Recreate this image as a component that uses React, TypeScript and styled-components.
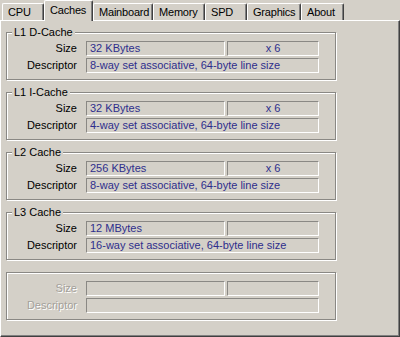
import React from "react";
import styled, { createGlobalStyle } from "styled-components";

const Global = createGlobalStyle`
  html, body { margin: 0; padding: 0; background: #d4d0c8; }
  body { font-family: "Liberation Sans", Arial, sans-serif; font-size: 11px; color: #000; }
`;

const Window = styled.div`
  width: 400px;
  height: 337px;
  display: flex;
  flex-direction: column;
  background: #d4d0c8;
  overflow: hidden;
`;

const TabBar = styled.div`
  height: 20px;
  display: flex;
  align-items: flex-end;
  padding-left: 2px;
  position: relative;
  z-index: 1;
`;

const Tab = styled.div<{ $w: number; $active?: boolean }>`
  box-sizing: border-box;
  width: ${(p) => p.$w}px;
  height: ${(p) => (p.$active ? 21 : 17)}px;
  margin-bottom: ${(p) => (p.$active ? -1 : 0)}px;
  padding: ${(p) => (p.$active ? "3px 0 0 5px" : "2px 0 0 5px")};
  background: #d4d0c8;
  border-top: 1px solid #fff;
  border-left: 1px solid #fff;
  border-right: 1px solid #404040;
  box-shadow: inset -1px 0 0 #808080;
  border-radius: 2px 2px 0 0;
  white-space: nowrap;
  line-height: 13px;
  letter-spacing: -0.2px;
`;

const Panel = styled.div`
  flex: 1;
  box-sizing: border-box;
  border-top: 1px solid #fff;
  border-left: 1px solid #fff;
  border-right: 1px solid #404040;
  border-bottom: 1px solid #404040;
  box-shadow: inset -1px -1px 0 #808080;
  padding: 5px 0 0 5px;
  display: flex;
  flex-direction: column;
  gap: 6px;
`;

const Group = styled.fieldset<{ $untitled?: boolean }>`
  box-sizing: border-box;
  width: 330px;
  margin: ${(p) => (p.$untitled ? "6px" : "0")} 0 0 0;
  padding: ${(p) => (p.$untitled ? "8px" : "2px")} 14px 6px 0;
  border: 1px solid #8a8884;
  box-shadow: inset 1px 1px 0 #fff, 1px 1px 0 #fff;
  display: grid;
  grid-template-columns: 79px 139px 94px;
  row-gap: 2px;
`;

const Title = styled.legend`
  margin-left: 5px;
  padding: 0 2px;
  line-height: 13px;
  background: #d4d0c8;
`;

const Label = styled.div<{ $disabled?: boolean }>`
  box-sizing: border-box;
  grid-column: 1;
  padding-right: 9px;
  text-align: right;
  line-height: 15px;
  color: ${(p) => (p.$disabled ? "#a3a09a" : "#000")};
  text-shadow: ${(p) => (p.$disabled ? "1px 1px 0 #fff" : "none")};
`;

const FieldBox = styled.div`
  box-sizing: border-box;
  height: 15px;
  line-height: 13px;
  padding-left: 3px;
  border-top: 1px solid #8a8884;
  border-left: 1px solid #8a8884;
  border-bottom: 1px solid #fff;
  border-right: 1px solid #fff;
  color: #2e2e8c;
  white-space: nowrap;
  overflow: hidden;
`;

const SizeField = styled(FieldBox)`
  width: 139px;
`;

const CountField = styled(FieldBox)`
  margin-left: 2px;
  width: 92px;
  padding-left: 0;
  text-align: center;
`;

const DescField = styled(FieldBox)`
  grid-column: 2 / 4;
  width: 233px;
`;

const Row = styled.div`
  display: contents;
`;

const tabs: [string, number][] = [
  ["CPU", 42],
  ["Caches", 49],
  ["Mainboard", 60],
  ["Memory", 52],
  ["SPD", 42],
  ["Graphics", 54],
  ["About", 43],
];

const caches = [
  { title: "L1 D-Cache", size: "32 KBytes", count: "x 6", desc: "8-way set associative, 64-byte line size" },
  { title: "L1 I-Cache", size: "32 KBytes", count: "x 6", desc: "4-way set associative, 64-byte line size" },
  { title: "L2 Cache", size: "256 KBytes", count: "x 6", desc: "8-way set associative, 64-byte line size" },
  { title: "L3 Cache", size: "12 MBytes", count: "", desc: "16-way set associative, 64-byte line size" },
];

export default function App() {
  return (
    <Window>
      <Global />
      <TabBar>
        {tabs.map(([t, w]) => (
          <Tab key={t} $w={w} $active={t === "Caches"}>
            {t}
          </Tab>
        ))}
      </TabBar>
      <Panel>
        {caches.map((c) => (
          <Group key={c.title}>
            <Title>{c.title}</Title>
            <Row>
              <Label>Size</Label>
              <SizeField>{c.size}</SizeField>
              <CountField>{c.count}</CountField>
            </Row>
            <Row>
              <Label>Descriptor</Label>
              <DescField>{c.desc}</DescField>
            </Row>
          </Group>
        ))}
        <Group $untitled>
          <Row>
            <Label $disabled>Size</Label>
            <SizeField />
            <CountField />
          </Row>
          <Row>
            <Label $disabled>Descriptor</Label>
            <DescField />
          </Row>
        </Group>
      </Panel>
    </Window>
  );
}
